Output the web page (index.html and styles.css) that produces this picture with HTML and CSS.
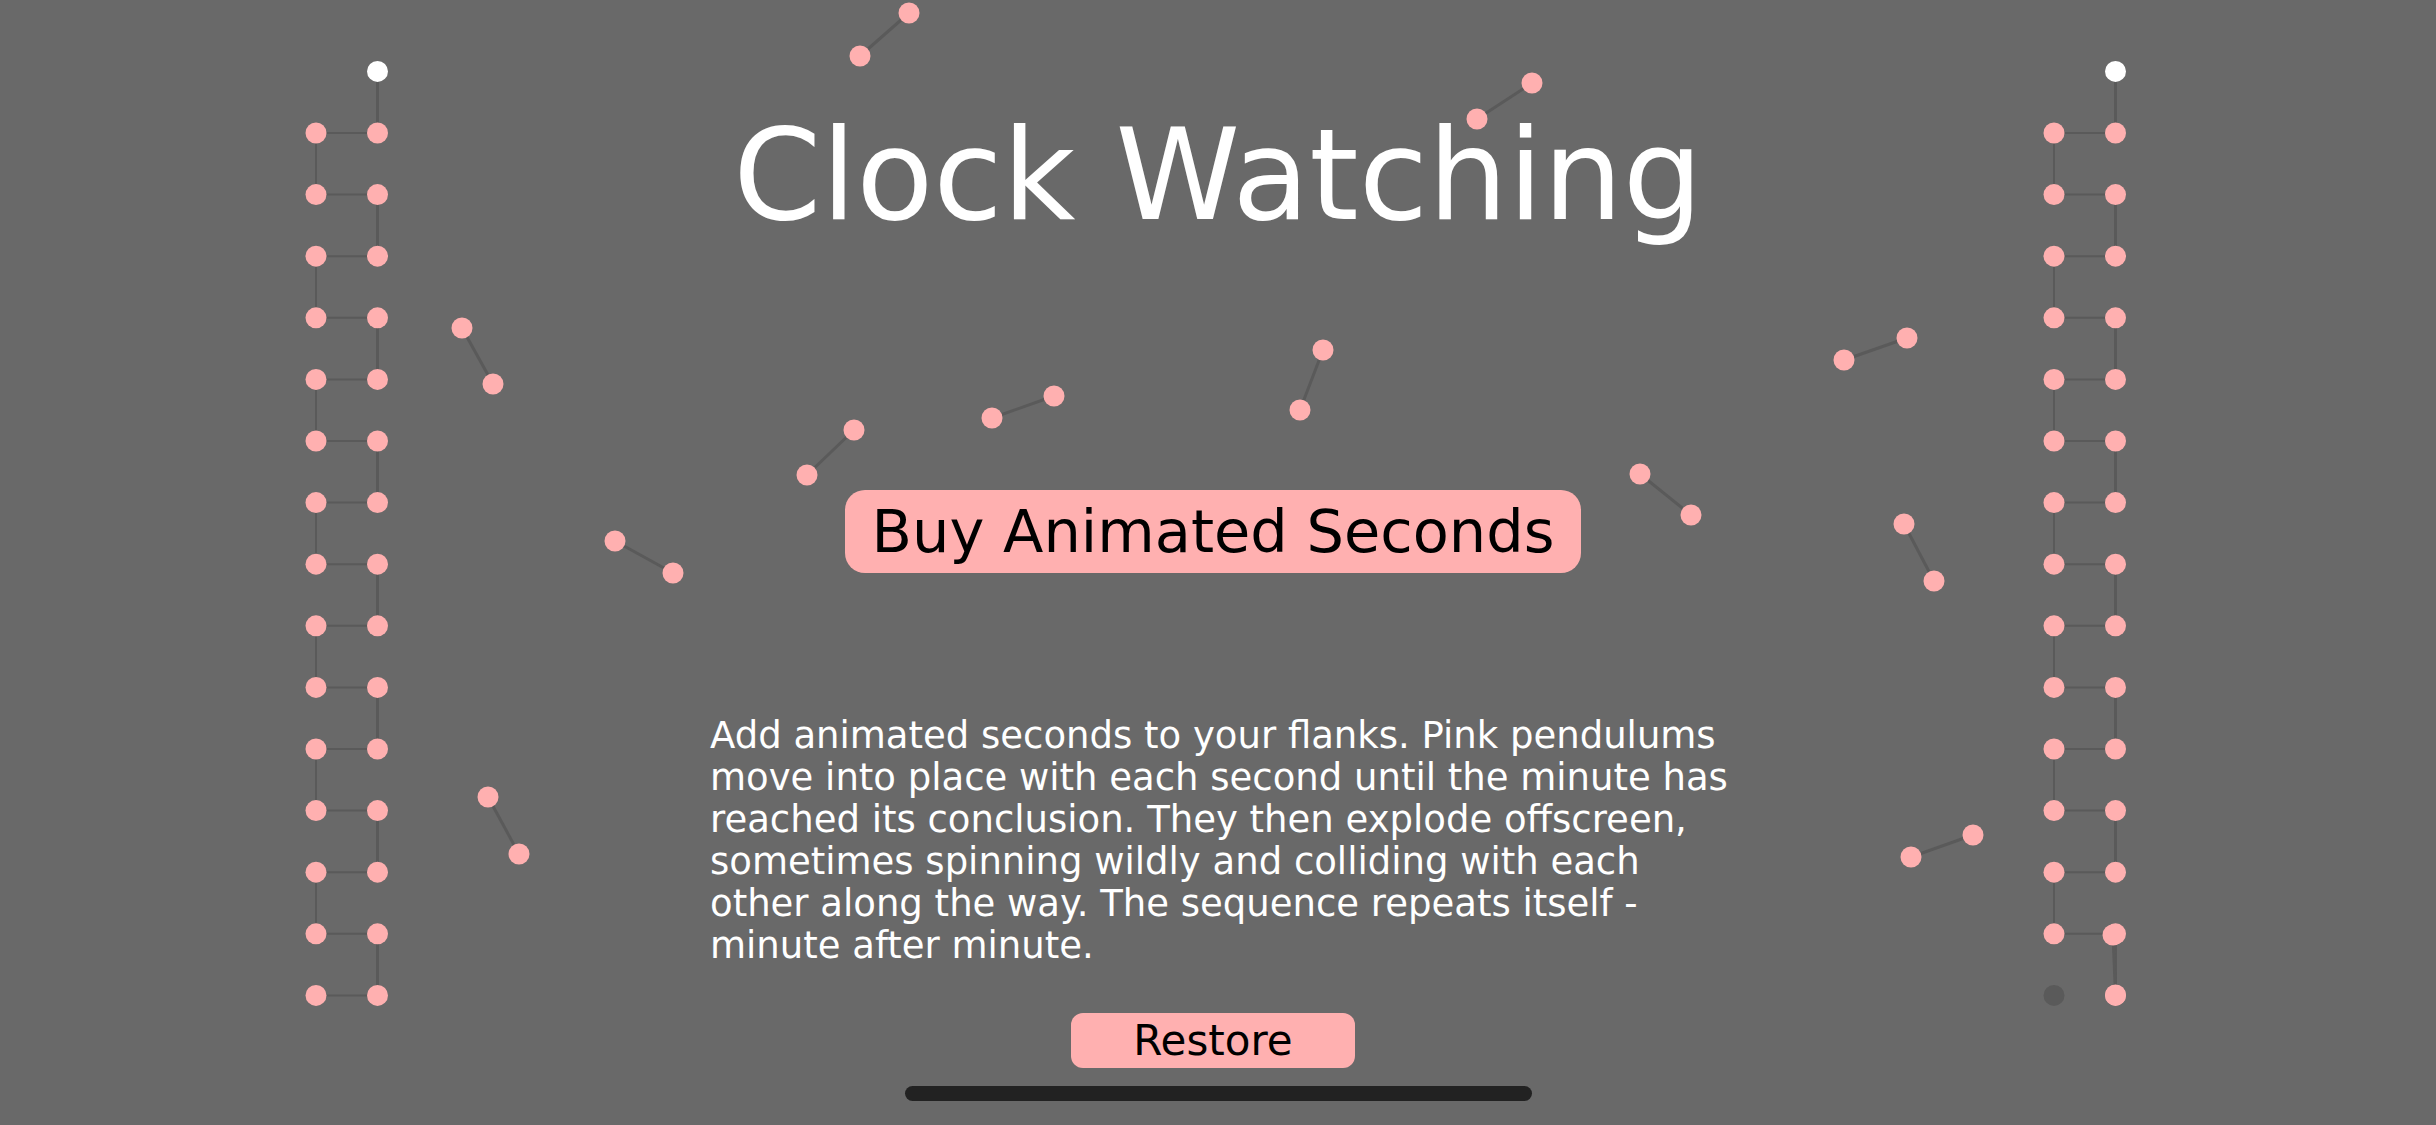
FILE: index.html
```html
<!DOCTYPE html>
<html lang="en">
<head>
  <meta charset="UTF-8">
  <meta name="viewport" content="width=device-width, initial-scale=1.0">
  <title>Clock Watching</title>
  <link rel="stylesheet" href="styles.css">
</head>
<body>

<!-- Pendulums drawn behind the content -->
<svg class="pendulums" id="pendulums" viewBox="0 0 2436 1125" aria-hidden="true"></svg>

<main class="store">
  <h1 class="title">Clock Watching</h1>
  <button class="button button-buy" type="button">Buy Animated Seconds</button>
  <p class="description">Add animated seconds to your flanks. Pink pendulums move into place with each second until the minute has reached its conclusion. They then explode offscreen, sometimes spinning wildly and colliding with each other along the way. The sequence repeats itself - minute after minute.</p>
  <button class="button button-restore" type="button">Restore</button>
  <div class="home-indicator"></div>
</main>

<script src="pendulums.js"></script>
</body>
</html>
```
FILE: styles.css
```css
/* General styles */
body {
  margin: 0;
  min-height: 100vh;
  background-color: #696969;
  color: white;
  font-family: "DejaVu Sans", Verdana, sans-serif;
  overflow: hidden;
}

/* Pendulum canvas */
.pendulums {
  position: absolute;
  top: 0;
  left: 0;
  width: 100%;
}

.rod {
  stroke: #5a5a5a;
  stroke-width: 3;
}

.rod-thin {
  stroke-width: 2;
}

.bob {
  fill: #ffb0b0;
}

.bob-anchor {
  fill: white;
}

.bob-empty {
  fill: #5a5a5a;
}

/* Store content */
.store {
  position: relative;
  display: flex;
  flex-direction: column;
  align-items: center;
  padding-top: 106px;
}

.title {
  margin: 0;
  font-size: 126px;
  font-weight: normal;
  line-height: 140px;
}

.description {
  box-sizing: border-box;
  width: 100%;
  max-width: 1032px;
  margin: 142px 0 0;
  padding-left: 8px;
  font-size: 37px;
  line-height: 42px;
}

/* Buttons */
.button {
  margin-right: 10px;
  padding: 0;
  border: none;
  background-color: #ffb0b0;
  color: black;
  font-family: inherit;
  cursor: pointer;
}

.button-buy {
  margin-top: 244px;
  padding: 0 27px;
  border-radius: 20px;
  font-size: 59px;
  line-height: 83px;
}

.button-restore {
  margin-top: 46px;
  padding: 0 62px;
  border-radius: 12px;
  font-size: 42px;
  line-height: 55px;
}

.home-indicator {
  width: 627px;
  height: 15px;
  margin-top: 18px;
  border-radius: 8px;
  background-color: #222;
}
```
FILE: pendulums.js
```js
const svg = document.getElementById('pendulums');
const NS = 'http://www.w3.org/2000/svg';

const ROWS = 15;
const TOP = 133;
const STEP = 61.6;
const RADIUS = 10.5;

// Pendulums still flying towards their place: x1, y1, x2, y2
const flying = [
  [860, 56, 909, 13],
  [1477, 119, 1532, 83],
  [462, 328, 493, 384],
  [807, 475, 854, 430],
  [992, 418, 1054, 396],
  [1300, 410, 1323, 350],
  [1844, 360, 1907, 338],
  [615, 541, 673, 573],
  [1640, 474, 1691, 515],
  [1904, 524, 1934, 581],
  [488, 797, 519, 854],
  [1911, 857, 1973, 835]
];

function add(tag, className, attrs) {
  const el = document.createElementNS(NS, tag);
  el.setAttribute('class', className);
  for (const name in attrs) {
    el.setAttribute(name, attrs[name]);
  }
  svg.appendChild(el);
}

function rod(x1, y1, x2, y2, className = 'rod') {
  add('line', className, { x1, y1, x2, y2 });
}

function bob(cx, cy, className = 'bob') {
  add('circle', className, { cx, cy, r: RADIUS });
}

function ladder(left, right, complete) {
  // Rods first, so the bobs cover their ends
  rod(right, TOP - STEP, right, TOP);
  for (let i = 0; i < ROWS; i++) {
    const y = TOP + i * STEP;
    const last = i === ROWS - 1;
    if (!last || complete) {
      rod(left, y, right, y, 'rod rod-thin');
    }
    if (!last) {
      const x = i % 2 ? right : left;
      rod(x, y, x, y + STEP, i % 2 ? 'rod' : 'rod rod-thin');
    }
  }

  bob(right, TOP - STEP, 'bob-anchor');
  for (let i = 0; i < ROWS; i++) {
    const y = TOP + i * STEP;
    bob(left, y, i === ROWS - 1 && !complete ? 'bob-empty' : 'bob');
    bob(right, y);
  }
}

ladder(316, 377.5, true);
ladder(2054, 2115.5, false);

// The newest pendulum has not quite settled on the right ladder
rod(2113, 935, 2115.5, 995);
bob(2113, 935);
bob(2115.5, 995);

flying.forEach(function([x1, y1, x2, y2]) {
  rod(x1, y1, x2, y2);
  bob(x1, y1);
  bob(x2, y2);
});
```
